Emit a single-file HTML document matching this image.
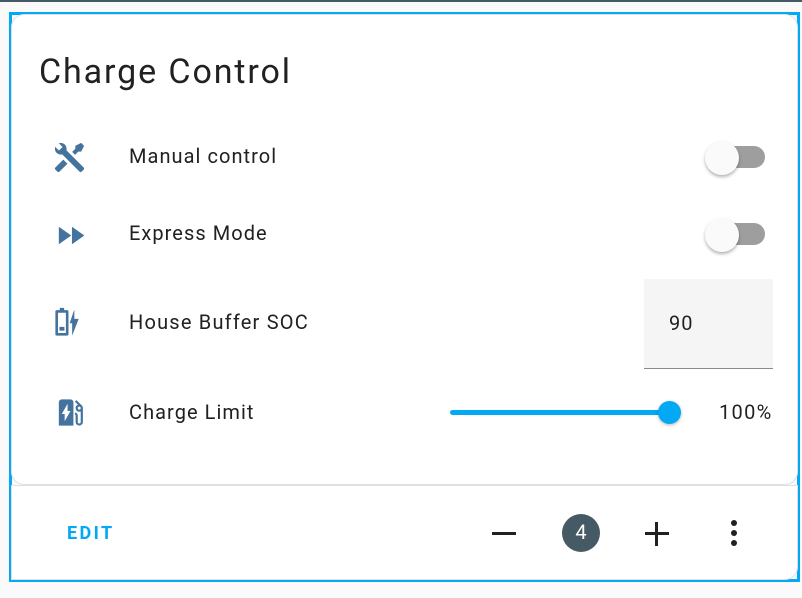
<!DOCTYPE html>
<html><head><meta charset="utf-8"><style>
*{margin:0;padding:0;box-sizing:border-box}
body{width:802px;height:598px;background:#fafafa;position:relative;overflow:hidden;font-family:"Roboto","Liberation Sans",sans-serif;color:#212121}
.top{position:absolute;left:0;top:0;width:802px;height:2px;background:#455a64}
.frame{position:absolute;left:9px;top:12px;width:791px;height:570px;border:3px solid #03a9f4;background:#fafafa}
.card{position:absolute;left:12px;top:15px;width:785px;height:469px;background:#fff;border-radius:12px 12px 12px 12px;box-shadow:0 0 0 1px #e0e0e0}
.foot{position:absolute;left:12px;top:486px;width:785px;height:93px;background:#fff;border-radius:0 0 12px 0;box-shadow:0 0 0 1px #e0e0e0}
.t{position:absolute;white-space:nowrap}
.r{font-size:20px;letter-spacing:1.05px}
svg.i{position:absolute;width:35px;height:35px;fill:#44739e}
.trk{position:absolute;width:58px;height:22px;border-radius:11px;background:#9e9e9e}
.knob{position:absolute;width:32px;height:32px;border-radius:50%;background:#fafafa;box-shadow:0 2px 3px rgba(0,0,0,.3)}
</style></head><body>
<div class="top"></div>
<div class="frame"></div>
<div class="card"></div>
<div class="foot"></div>
<div class="t" style="left:39px;top:52px;font-size:34px;letter-spacing:1.9px">Charge Control</div>

<svg class="i" style="left:52px;top:140px" viewBox="0 0 24 24"><path d="M21.71 20.29L20.29 21.71A1 1 0 0 1 18.88 21.71L7 9.85A3.81 3.81 0 0 1 6 10A4 4 0 0 1 2.22 4.7L4.76 7.24L5.29 6.71L6.71 5.29L7.24 4.76L4.7 2.22A4 4 0 0 1 10 6A3.81 3.81 0 0 1 9.85 7L21.71 18.88A1 1 0 0 1 21.71 20.29M2.29 18.88A1 1 0 0 0 2.29 20.29L3.71 21.71A1 1 0 0 0 5.12 21.71L10.59 16.25L7.76 13.42M20 2L16 4V6L13.83 8.17L15.83 10.17L18 8H20L22 4Z"/></svg>
<div class="t r" style="left:129px;top:144px">Manual control</div>
<div class="trk" style="left:707px;top:146px"></div><div class="knob" style="left:705px;top:141px;width:34px;height:34px"></div>

<svg class="i" style="left:53px;top:218px" viewBox="0 0 24 24"><path d="M13,6V18L21.5,12M4,18L12.5,12L4,6V18Z"/></svg>
<div class="t r" style="left:129px;top:221px">Express Mode</div>
<div class="trk" style="left:707px;top:223px"></div><div class="knob" style="left:705px;top:218px;width:34px;height:34px"></div>

<svg class="i" style="left:51px;top:305px" viewBox="0 0 24 24"><path d="M4 3.5h2V2h3v1.5h2a1 1 0 0 1 1 1V20a1 1 0 0 1-1 1H4a1 1 0 0 1-1-1V4.5a1 1 0 0 1 1-1zM4.8 5.3V19.2h5.4V5.3zM5.8 15h3.4v2.6H5.8zM16 3v6.5h3L14.5 21V12.5H12.8z"/></svg>
<div class="t r" style="left:129px;top:310px;letter-spacing:1.2px">House Buffer SOC</div>
<div style="position:absolute;left:644px;top:279px;width:129px;height:90px;background:#f5f5f5;border-bottom:1px solid #8a8a8a"></div>
<div class="t r" style="left:669px;top:311px">90</div>

<svg class="i" style="left:53px;top:395px" viewBox="0 0 24 24"><path d="M4 5a2 2 0 0 1 2-2h6a2 2 0 0 1 2 2v16H4zM10 6L6 13h2v5l4-7h-2zM15 4.56L16.06 3.5L19.78 7.22C20.22 7.68 20.5 8.31 20.5 9V18.5A2.5 2.5 0 0 1 15.5 18.5V13.5H15V12A2 2 0 0 1 17 14V18.5A1 1 0 0 0 19 18.5V11.29C18.69 11.42 18.36 11.5 18 11.5A2.5 2.5 0 0 1 17.11 6.67zM18 8A1 1 0 0 0 18 10A1 1 0 0 0 18 8z"/></svg>
<div class="t r" style="left:129px;top:400px">Charge Limit</div>
<div style="position:absolute;left:450px;top:410px;width:220px;height:5px;border-radius:3px;background:#03a9f4"></div>
<div style="position:absolute;left:658px;top:401px;width:23px;height:23px;border-radius:50%;background:#03a9f4;box-shadow:0 1px 3px rgba(0,0,0,.3)"></div>
<div class="t r" style="left:719px;top:400px;letter-spacing:1.3px">100%</div>

<div class="t" style="left:67px;top:523px;font-size:18px;font-weight:bold;color:#03a9f4;letter-spacing:2.4px">EDIT</div>
<div style="position:absolute;left:492px;top:532px;width:24px;height:3px;background:#212121"></div>
<div style="position:absolute;left:562px;top:514px;width:38px;height:38px;border-radius:50%;background:#455a64;color:#fff;font-size:20px;text-align:center;line-height:37px">4</div>
<div style="position:absolute;left:645px;top:532px;width:24px;height:3px;background:#212121"></div>
<div style="position:absolute;left:655px;top:522px;width:3px;height:24px;background:#212121"></div>
<div style="position:absolute;left:731px;top:520px;width:6px;height:6px;border-radius:50%;background:#212121"></div>
<div style="position:absolute;left:731px;top:530px;width:6px;height:6px;border-radius:50%;background:#212121"></div>
<div style="position:absolute;left:731px;top:540px;width:6px;height:6px;border-radius:50%;background:#212121"></div>
</body></html>
